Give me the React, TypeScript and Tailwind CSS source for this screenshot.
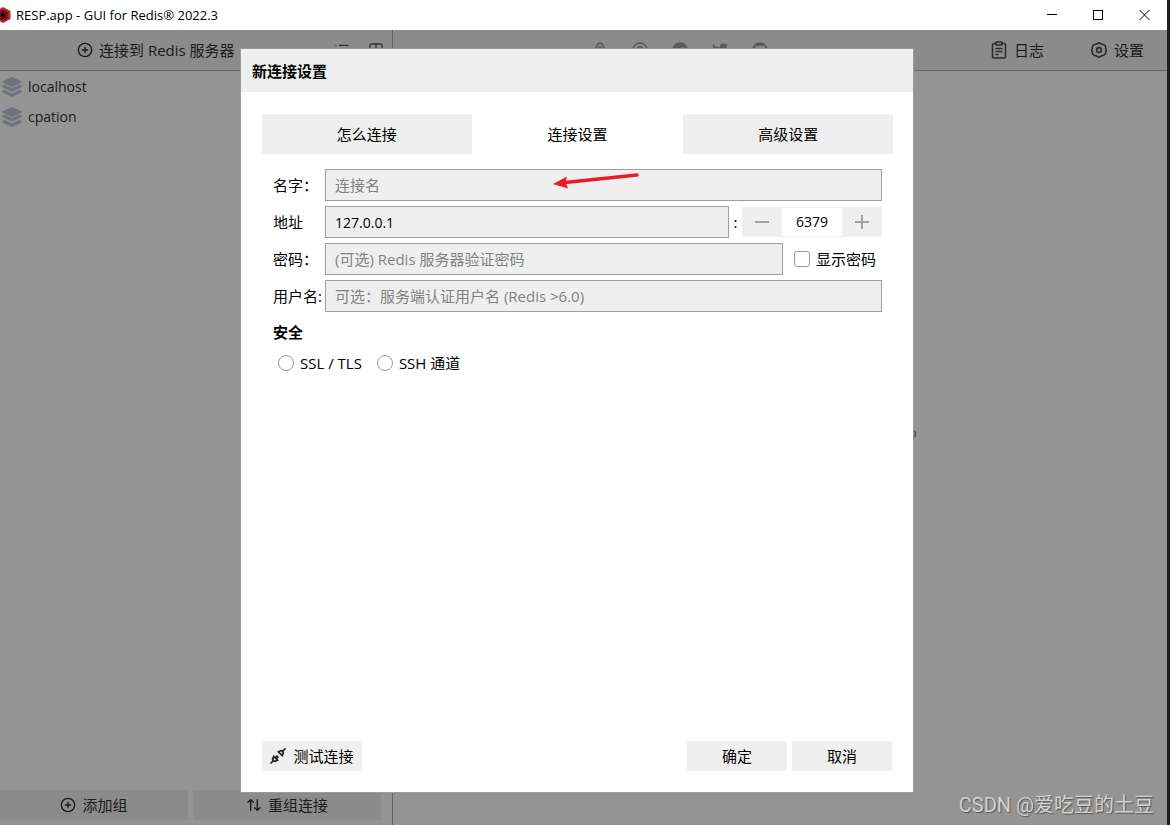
import type { ReactNode } from "react";
import { ArrowUpDown, CirclePlus, Columns2, List } from "lucide-react";
import { FaGithub, FaTelegram, FaTwitter } from "react-icons/fa";

function LayersIcon() {
  return (
    <svg viewBox="0 0 20 20" className="size-5 shrink-0" fill="#6f727c">
      <path d="M10 0.5 19.5 5 10 9.6 0.5 5Z" stroke="#6f727c" strokeLinejoin="round" />
      <path d="M0.5 8.5 3 7.8 10 11.2 17 7.8 19.5 8.5V10.2L10 14.8 0.5 10.2Z" />
      <path d="M0.5 13.7 3 13 10 16.4 17 13 19.5 13.7V15.4L10 20 0.5 15.4Z" />
    </svg>
  );
}

function ClipboardIcon() {
  return (
    <svg viewBox="0 0 16 18" className="h-[18px] w-4" fill="none" stroke="#2b2b2b" strokeWidth="1.6" strokeLinecap="round" strokeLinejoin="round">
      <path d="M5 2.500H3Q1.500 2.500 1.500 4V15.500Q1.500 17 3 17H13Q14.500 17 14.500 15.500V4Q14.500 2.500 13 2.500H11" />
      <path d="M5.500 1H10.500Q11 1 11 1.500V3.500Q11 4 10.500 4H5.500Q5 4 5 3.500V1.500Q5 1 5.500 1Z" />
      <path d="M5 7.500h6M5 10.500h6M5 13.500h2" strokeWidth="1.300" />
    </svg>
  );
}

function GearIcon() {
  return (
    <svg viewBox="0 0 16 16" className="size-4" fill="none" stroke="#2b2b2b" strokeWidth="1.600" strokeLinejoin="round">
      <path d="M6.200 1.600Q8 .2 9.800 1.600 10.900 2.600 12.200 2.500 14.300 2.700 14.600 4.900 14.500 6 15 6.900 15.600 8 15 9.100 14.500 10 14.600 11.100 14.300 13.300 12.200 13.500 10.900 13.400 9.800 14.400 8 15.800 6.200 14.400 5.100 13.400 3.800 13.500 1.700 13.300 1.400 11.100 1.500 10 1 9.100.4 8 1 6.900 1.500 6 1.400 4.900 1.700 2.700 3.800 2.500 5.100 2.600 6.200 1.600Z" />
      <circle cx="8" cy="8" r="2.400" />
    </svg>
  );
}

function PlugIcon() {
  return (
    <svg viewBox="0 0 16 16" className="size-4" fill="none" stroke="#222222" strokeWidth="1.700" strokeLinecap="round" strokeLinejoin="round">
      <path d="M1 15l2.200-2.200M12.800 3.200 15 1" />
      <path d="M3.600 8.200 7.800 12.400M4.200 8.800Q1.800 10.600 3.200 12.800 5.400 14.200 7.200 11.800M5.700 9.300 7 8M6.700 10.300 8 9" />
      <path d="M8.200 3.600 12.400 7.800M8.800 4.200Q10.600 1.800 12.800 3.200 14.200 5.400 11.800 7.200" />
    </svg>
  );
}

function TabButton({ active, children }: { active?: boolean; children: ReactNode }) {
  return (
    <button type="button" className={active ? "h-10 bg-white" : "h-10 bg-[#efefef]"}>
      {children}
    </button>
  );
}

const inputClass =
  "h-8 w-full min-w-0 border border-[#9f9f9f] bg-[#efefef] px-[9px] text-black outline-none placeholder:text-[#828282]";

function TitleBar() {
  return (
    <header className="flex h-[30px] shrink-0 items-center bg-white text-[13px] text-black">
      <svg viewBox="0 0 11 16" className="mr-[5px] h-4 w-[11px]">
        <path d="M-4 4 3 0 10.500 4V12L3 16-4 12Z" fill="#b3262c" />
        <path d="M-2 5 3 2.500 8 5V11L3 13.500-2 11Z" fill="#6d1015" />
        <circle cx="3" cy="8" r="2.200" fill="#1c0507" />
      </svg>
      <h1 className="flex-1">RESP.app - GUI for Redis® 2022.3</h1>
      <button type="button" aria-label="Minimize" className="flex h-full w-[46px] items-center justify-center">
        <svg viewBox="0 0 11 11" className="size-[11px]" stroke="black" shapeRendering="crispEdges">
          <path d="M0 4.500h10" />
        </svg>
      </button>
      <button type="button" aria-label="Maximize" className="flex h-full w-[46px] items-center justify-center">
        <svg viewBox="0 0 11 11" className="size-[11px]" fill="none" stroke="black" shapeRendering="crispEdges">
          <path d="M.5.5h9v9h-9z" />
        </svg>
      </button>
      <button type="button" aria-label="Close" className="flex h-full w-[46px] items-center justify-center">
        <svg viewBox="0 0 11 11" className="size-[11px]" stroke="black">
          <path d="M.5 0l10 10M10.500 0l-10 10" />
        </svg>
      </button>
    </header>
  );
}

function Sidebar() {
  return (
    <aside className="flex w-[393px] shrink-0 flex-col border-r border-[#636363]">
      <div className="flex h-[41px] items-center border-b border-[#696969] bg-[#8b8b8b] pr-2 pl-[77px]">
        <button type="button" className="flex flex-1 items-center gap-1.5">
          <CirclePlus className="size-4" strokeWidth={2} />
          连接到 Redis 服务器
        </button>
        <div className="flex items-center gap-[18px] text-[#333333]">
          <List className="size-4" />
          <Columns2 className="size-4" />
        </div>
      </div>
      <ul className="flex-1 pt-px">
        {["localhost", "cpation"].map((name) => (
          <li key={name} className="flex h-[30px] items-center gap-1.5 pl-0.5 text-sm">
            <LayersIcon />
            {name}
          </li>
        ))}
      </ul>
      <div className="flex gap-[5px] pr-[11px] pb-[5px]">
        <button type="button" className="flex h-[30px] flex-1 items-center justify-center gap-1.5 bg-[#8b8b8b]">
          <CirclePlus className="size-4" strokeWidth={2} />
          添加组
        </button>
        <button type="button" className="flex h-[30px] flex-1 items-center justify-center gap-1.5 bg-[#8b8b8b]">
          <ArrowUpDown className="size-4" strokeWidth={2} />
          重组连接
        </button>
      </div>
    </aside>
  );
}

function MainPanel() {
  return (
    <main className="relative flex-1">
      <div className="flex h-[41px] items-center border-b border-[#696969] bg-[#8b8b8b] pr-[23px] pl-[199px]">
        <div className="flex flex-1 gap-6 text-[#5a5a5a]">
          <svg viewBox="0 0 16 16" className="size-4" fill="none" stroke="currentColor" strokeWidth="1.500">
            <path d="M4 12V6Q5 2 8 .8 11 2 12 6v6z" />
            <circle cx="8" cy="6" r="1.200" />
          </svg>
          <svg viewBox="0 0 16 16" className="size-4" fill="none" stroke="currentColor" strokeWidth="1.500">
            <circle cx="8" cy="8" r="7" />
            <circle cx="8" cy="8" r="3" />
          </svg>
          <FaTelegram className="size-4" />
          <FaTwitter className="size-4" />
          <FaGithub className="size-4" />
        </div>
        <button type="button" className="flex items-center gap-[7px]">
          <ClipboardIcon />
          日志
        </button>
        <button type="button" className="ml-[47px] flex items-center gap-[7px]">
          <GearIcon />
          设置
        </button>
      </div>
      <span className="absolute top-[393px] left-[515px] text-sm text-[#4a4427]">p</span>
      <p className="absolute right-[13px] bottom-2 font-['Roboto','Noto_Sans_CJK_SC',sans-serif] text-xl leading-6 text-[#d2d2d2] [text-shadow:1px_1px_1px_#555]">
        CSDN @爱吃豆的土豆
      </p>
    </main>
  );
}

function ConnectionDialog() {
  return (
    <section
      role="dialog"
      aria-labelledby="dialog-title"
      className="relative flex w-full max-w-[674px] flex-col border border-[#9b9b9b] bg-white text-black"
    >
      <h2 id="dialog-title" className="flex h-[43px] items-center bg-[#efefef] px-[11px] font-bold">
        新连接设置
      </h2>
      <div className="flex flex-1 flex-col pt-[22px] pr-5 pb-[21px] pl-[21px]">
        <div className="grid grid-cols-3 gap-px">
          <TabButton>怎么连接</TabButton>
          <TabButton active>连接设置</TabButton>
          <TabButton>高级设置</TabButton>
        </div>

        <form className="flex flex-1 flex-col">
          <div className="mt-[15px] grid grid-cols-[52px_1fr] items-center gap-y-[5px] px-[11px]">
            <label htmlFor="name">名字：</label>
            <input id="name" className={inputClass} placeholder="连接名" />

            <label htmlFor="host">地址</label>
            <div className="flex items-center">
              <input id="host" className={`${inputClass} text-sm`} defaultValue="127.0.0.1" />
              <span className="w-[13px] shrink-0 text-center">:</span>
              <div className="flex h-[30px] w-[140px] shrink-0 bg-[#efefef]">
                <button type="button" aria-label="Decrease port" className="flex w-10 items-center justify-center">
                  <svg viewBox="0 0 14 14" className="size-3.5" stroke="#9f9f9f" strokeWidth="2">
                    <path d="M0 7h14" />
                  </svg>
                </button>
                <input aria-label="Port" defaultValue="6379" className="my-px w-[60px] bg-white text-center text-sm outline-none" />
                <button type="button" aria-label="Increase port" className="flex w-10 items-center justify-center">
                  <svg viewBox="0 0 14 14" className="size-3.5" stroke="#9f9f9f" strokeWidth="2">
                    <path d="M0 7h14M7 0v14" />
                  </svg>
                </button>
              </div>
            </div>

            <label htmlFor="password">密码：</label>
            <div className="flex items-center">
              <input id="password" className={inputClass} placeholder="(可选) Redis 服务器验证密码" />
              <label className="flex w-[99px] shrink-0 items-center gap-1.5 pl-[11px] whitespace-nowrap">
                <input type="checkbox" className="size-4 shrink-0 appearance-none rounded-[3px] border border-[#999999] bg-white" />
                显示密码
              </label>
            </div>

            <label htmlFor="username" className="whitespace-nowrap">用户名:</label>
            <input id="username" className={inputClass} placeholder="可选：服务端认证用户名 (Redis >6.0)" />
          </div>

          <fieldset className="px-[11px] pt-2.5">
            <legend className="contents font-bold">安全</legend>
            <div className="mt-[11px] flex gap-[15px] pl-[5px]">
              <label className="flex items-center gap-1.5">
                <input type="radio" name="security" className="size-4 appearance-none rounded-full border border-[#999999] bg-white" />
                SSL / TLS
              </label>
              <label className="flex items-center gap-1.5">
                <input type="radio" name="security" className="size-4 appearance-none rounded-full border border-[#999999] bg-white" />
                SSH 通道
              </label>
            </div>
          </fieldset>

          <div className="mt-auto flex gap-[5px] pr-px">
            <button type="button" className="mr-auto flex h-[30px] w-[100px] items-center justify-center gap-[7px] bg-[#efefef]">
              <PlugIcon />
              测试连接
            </button>
            <button type="submit" className="h-[30px] w-[100px] bg-[#efefef]">确定</button>
            <button type="button" className="h-[30px] w-[100px] bg-[#efefef]">取消</button>
          </div>
        </form>
      </div>

      {/* hand-drawn pointer over the name field */}
      <svg viewBox="0 0 88 18" className="pointer-events-none absolute top-[122px] left-[312px] h-[18px] w-[88px]">
        <path d="M12 11.500 84 4" stroke="#ed1c24" strokeWidth="3.500" strokeLinecap="round" />
        <path d="M0 13 14 5.500 12.500 11 15 17.500Z" fill="#ed1c24" />
      </svg>
    </section>
  );
}

export default function App() {
  return (
    <div className="flex h-screen bg-[#1d2022] font-['Open_Sans','Noto_Sans_CJK_SC',sans-serif] text-[15px] leading-5 text-[#1a1a1a]">
      <div className="relative mr-[3px] flex flex-1 flex-col overflow-hidden bg-[#949494]">
        <TitleBar />
        <div className="flex flex-1">
          <Sidebar />
          <MainPanel />
        </div>
        <div className="absolute inset-0 flex justify-center pt-12 pr-[13px] pb-8">
          <ConnectionDialog />
        </div>
      </div>
    </div>
  );
}
